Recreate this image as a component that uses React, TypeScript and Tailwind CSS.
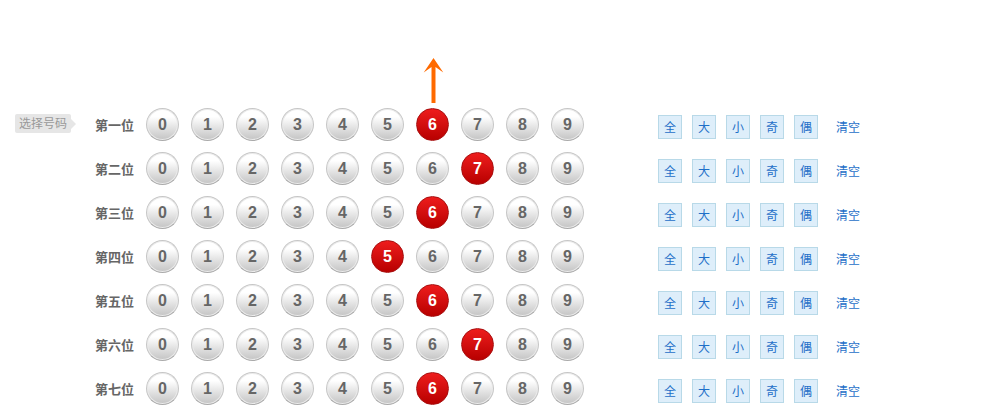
import { useState } from 'react';

const POSITIONS = ['第一位', '第二位', '第三位', '第四位', '第五位', '第六位', '第七位'];
const DIGITS = [0, 1, 2, 3, 4, 5, 6, 7, 8, 9];
const FILTERS = ['全', '大', '小', '奇', '偶'];

function matches(filter: string, digit: number) {
  if (filter === '大') return digit >= 5;
  if (filter === '小') return digit < 5;
  if (filter === '奇') return digit % 2 === 1;
  if (filter === '偶') return digit % 2 === 0;
  return true;
}

function UpArrow() {
  return (
    <svg
      className="pointer-events-none absolute bottom-full left-1/2 mb-1 -translate-x-1/2"
      width="21"
      height="46"
      viewBox="0 0 21 46"
      aria-hidden="true"
    >
      <path d="M11 0 L20.8 14.5 L13 9 V45 H9 V9 L1.2 14.5 Z" fill="#ff6a00" />
    </svg>
  );
}

function Ball({ digit, selected, pointed, onClick }: {
  digit: number;
  selected: boolean;
  pointed: boolean;
  onClick: () => void;
}) {
  return (
    <div className="relative">
      {pointed && <UpArrow />}
      <button
        type="button"
        aria-pressed={selected}
        onClick={onClick}
        className={
          'flex size-[33px] items-center justify-center rounded-full border text-base font-bold leading-none ' +
          (selected
            ? 'border-[#a80f0f] bg-linear-to-b from-[#ee1c1c] to-[#b80000] text-white'
            : 'border-[#c6c6c6] border-b-[#aaa] bg-linear-to-b from-white from-25% to-[#c4c4c4] text-[#666] shadow-[inset_0_0_0_1px_#ebebeb]')
        }
      >
        {digit}
      </button>
    </div>
  );
}

export default function App() {
  const [picks, setPicks] = useState<number[][]>([[6], [7], [6], [5], [6], [7], [6]]);

  const setRow = (row: number, next: number[]) =>
    setPicks((all) => all.map((current, i) => (i === row ? next : current)));

  const toggle = (row: number, digit: number) =>
    setRow(
      row,
      picks[row].includes(digit) ? picks[row].filter((d) => d !== digit) : [...picks[row], digit],
    );

  return (
    <main className="flex items-start bg-white pt-[108px] pb-[15px] pl-[15px] font-['Liberation_Sans','Noto_Sans_CJK_SC',sans-serif]">
      <div className="mt-1.5 flex w-20 shrink-0 items-center">
        <h2 className="h-[19px] rounded-[2px] bg-[#e6e6e6] px-1 text-xs leading-[21px] text-[#999]">
          选择号码
        </h2>
        <svg width="5" height="10" viewBox="0 0 5 10" aria-hidden="true">
          <path d="M0 0 L5 5 L0 10 Z" fill="#e6e6e6" />
        </svg>
      </div>
      <div className="flex grow flex-col gap-[11px]">
        {POSITIONS.map((name, row) => (
          <div key={name} role="group" aria-label={name} className="flex h-[33px] items-center">
            <span className="w-[51px] shrink-0 pt-0.5 text-[13px] font-bold leading-4 text-[#666]">{name}</span>
            <div className="flex shrink-0 gap-3">
              {DIGITS.map((digit) => (
                <Ball
                  key={digit}
                  digit={digit}
                  selected={picks[row].includes(digit)}
                  pointed={row === 0 && digit === 6}
                  onClick={() => toggle(row, digit)}
                />
              ))}
            </div>
            <div className="ml-[74px] flex shrink-0 items-center gap-2.5 pt-1 text-xs text-[#1e6fc8]">
              {FILTERS.map((filter) => (
                <button
                  key={filter}
                  type="button"
                  onClick={() => setRow(row, DIGITS.filter((d) => matches(filter, d)))}
                  className="flex size-6 items-center justify-center border border-[#b8d9e8] bg-[#deeefa] pt-0.5 leading-none"
                >
                  {filter}
                </button>
              ))}
              <button type="button" onClick={() => setRow(row, [])} className="ml-2 pt-0.5 leading-none">
                清空
              </button>
            </div>
          </div>
        ))}
      </div>
    </main>
  );
}
